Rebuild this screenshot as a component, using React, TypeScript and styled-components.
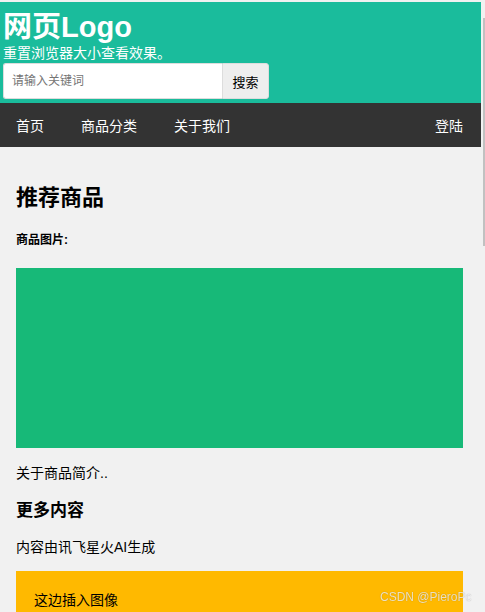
import styled, { createGlobalStyle } from "styled-components";

const GlobalStyle = createGlobalStyle`
  body {
    margin: 0;
    background: #f1f1f1;
    font-family: "Liberation Sans", "Noto Sans CJK SC", sans-serif;
    color: #000;
  }
  * {
    box-sizing: border-box;
  }
`;

const Page = styled.div`
  padding-top: 2px;
  width: 481px;
`;

const Header = styled.header`
  background: #1abc9c;
  color: #fff;
  padding: 9px 3px 4px;
`;

const Logo = styled.h1`
  margin: 0;
  font-size: 29px;
  line-height: 32px;
  font-weight: bold;
`;

const Tagline = styled.p`
  margin: 0;
  font-size: 14px;
  line-height: 20px;
`;

const SearchRow = styled.form`
  display: flex;
  height: 36px;
`;

const SearchInput = styled.input`
  width: 219px;
  height: 36px;
  border: 1px solid #ddd;
  border-right: none;
  border-radius: 3px 0 0 3px;
  padding: 0 8px;
  font-family: inherit;
  font-size: 12px;
  outline: none;
  &::placeholder {
    color: #757575;
  }
`;

const SearchButton = styled.button`
  width: 47px;
  height: 36px;
  border: 1px solid #ddd;
  border-radius: 0 3px 3px 0;
  background: #eee;
  font-family: inherit;
  font-size: 13px;
  color: #000;
  padding: 0;
`;

const Nav = styled.nav`
  display: flex;
  background: #333;
  height: 44px;
  align-items: center;
  padding-right: 2px;
`;

const NavLink = styled.a<{ $right?: boolean }>`
  color: #fff;
  font-size: 14px;
  text-decoration: none;
  padding: 0 16px;
  margin-right: ${(p) => (p.$right ? "0" : "5px")};
  margin-left: ${(p) => (p.$right ? "auto" : "0")};
`;

const Main = styled.main`
  padding: 20px 18px 0 16px;
`;

const Title = styled.h2`
  margin: 16px 0 0;
  font-size: 22px;
  line-height: 30px;
  font-weight: bold;
`;

const Label = styled.h5`
  margin: 18px 0 0;
  font-size: 12px;
  line-height: 18px;
  font-weight: bold;
`;

const ImageBox = styled.div<{ $color: string; $height: number; $gap: number }>`
  background: ${(p) => p.$color};
  height: ${(p) => p.$height}px;
  margin-top: ${(p) => p.$gap}px;
  padding: 18px;
  font-size: 14px;
`;

const Text = styled.p<{ $gap: number }>`
  margin: ${(p) => p.$gap}px 0 0;
  font-size: 14px;
  line-height: 22px;
`;

const SubTitle = styled.h3`
  margin: 15px 0 0;
  font-size: 17px;
  line-height: 24px;
  font-weight: bold;
`;

const Watermark = styled.div`
  position: fixed;
  left: 380px;
  top: 590px;
  font-size: 12px;
  color: rgba(255, 255, 255, 0.75);
  text-shadow: 0 0 1px rgba(0, 0, 0, 0.35);
`;

const ScrollTrack = styled.div`
  position: fixed;
  top: 0;
  right: 0;
  width: 4px;
  height: 100%;
  background: #f1f1f1;
`;

const ScrollThumb = styled.div`
  position: absolute;
  top: 18px;
  right: 0;
  width: 2px;
  height: 228px;
  background: #c1c1c1;
`;

export default function App() {
  return (
    <>
      <GlobalStyle />
      <Page>
        <Header>
          <Logo>网页Logo</Logo>
          <Tagline>重置浏览器大小查看效果。</Tagline>
          <SearchRow onSubmit={(e) => e.preventDefault()}>
            <SearchInput placeholder="请输入关键词" />
            <SearchButton type="submit">搜索</SearchButton>
          </SearchRow>
        </Header>
        <Nav>
          <NavLink href="#">首页</NavLink>
          <NavLink href="#">商品分类</NavLink>
          <NavLink href="#">关于我们</NavLink>
          <NavLink href="#" $right>
            登陆
          </NavLink>
        </Nav>
        <Main>
          <Title>推荐商品</Title>
          <Label>商品图片:</Label>
          <ImageBox $color="#17b978" $height={180} $gap={19} />
          <Text $gap={14}>关于商品简介..</Text>
          <SubTitle>更多内容</SubTitle>
          <Text $gap={13}>内容由讯飞星火AI生成</Text>
          <ImageBox $color="#ffb900" $height={200} $gap={13}>
            这边插入图像
          </ImageBox>
        </Main>
      </Page>
      <Watermark>CSDN @PieroPc</Watermark>
      <ScrollTrack>
        <ScrollThumb />
      </ScrollTrack>
    </>
  );
}
